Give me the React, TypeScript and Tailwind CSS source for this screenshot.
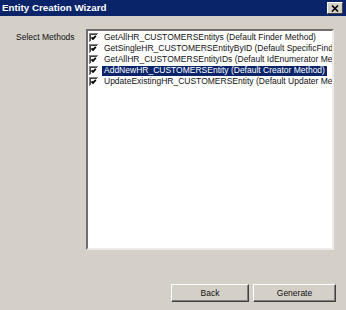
const methods = [
  "GetAllHR_CUSTOMERSEntitys (Default Finder Method)",
  "GetSingleHR_CUSTOMERSEntityByID (Default SpecificFinder Method)",
  "GetAllHR_CUSTOMERSEntityIDs (Default IdEnumerator Method)",
  "AddNewHR_CUSTOMERSEntity (Default Creator Method)",
  "UpdateExistingHR_CUSTOMERSEntity (Default Updater Method)",
];

function CheckBox() {
  return (
    <svg width="9" height="9" viewBox="0 0 9 9" className="shrink-0">
      <rect x="0" y="0" width="9" height="9" fill="#808080" />
      <rect x="1" y="1" width="8" height="8" fill="#ffffff" />
      <rect x="1" y="1" width="7" height="7" fill="#404040" />
      <rect x="2" y="2" width="6" height="6" fill="#ffffff" />
      <path d="M2.5 4.3 L4 5.9 L6.8 2.9" stroke="#000" strokeWidth="1.8" fill="none" />
    </svg>
  );
}

export default function App() {
  const selected = 3;

  return (
    <div
      className="w-[346px] h-[310px] bg-[#d4d0c8] flex flex-col overflow-hidden"
      style={{ fontFamily: '"Liberation Sans", Arial, sans-serif' }}
    >
      <div className="h-[16px] bg-[#0a246a] flex items-center justify-between pl-[2px] pr-[3px]">
        <span className="text-white font-bold text-[9.8px] leading-none">Entity Creation Wizard</span>
        <div className="w-[16px] h-[12px] bg-[#d4d0c8] border-t border-l border-white border-r border-b border-r-[#404040] border-b-[#404040] flex items-center justify-center">
          <svg width="8" height="7" viewBox="0 0 8 7">
            <path d="M1 0.5 L7 6.5 M7 0.5 L1 6.5" stroke="#000" strokeWidth="1.6" />
          </svg>
        </div>
      </div>

      <div className="flex mt-[13px]">
        <div className="w-[86px] pl-[16px] pt-[4px] text-[8.5px] text-[#111] leading-none">Select Methods</div>
        <div className="w-[248px] h-[221px] border-t-2 border-l-2 border-t-[#6e6e6e] border-l-[#6e6e6e] border-b-2 border-r-2 border-b-[#ececec] border-r-[#ececec] bg-white overflow-hidden pt-[1px]">
          {methods.map((m, i) => (
            <div key={m} className="h-[11px] flex items-center pl-[1px] whitespace-nowrap">
              <CheckBox />
              <span
                className={`ml-[4px] px-[2px] h-[10px] flex items-center text-[8.5px] leading-none ${
                  i === selected ? "bg-[#0a246a] text-white" : "text-[#111]"
                }`}
              >
                {m}
              </span>
            </div>
          ))}
        </div>
      </div>

      <div className="flex justify-end gap-[4px] pr-[10px] mt-[34px]">
        <button className="w-[78px] h-[18px] bg-[#d4d0c8] border border-t-white border-l-white border-r-[#404040] border-b-[#404040] shadow-[inset_-1px_-1px_0_#808080] text-[8.5px] text-[#111]">
          Back
        </button>
        <button className="w-[83px] h-[18px] bg-[#d4d0c8] border border-t-white border-l-white border-r-[#404040] border-b-[#404040] shadow-[inset_-1px_-1px_0_#808080] text-[8.5px] text-[#111]">
          Generate
        </button>
      </div>
    </div>
  );
}
